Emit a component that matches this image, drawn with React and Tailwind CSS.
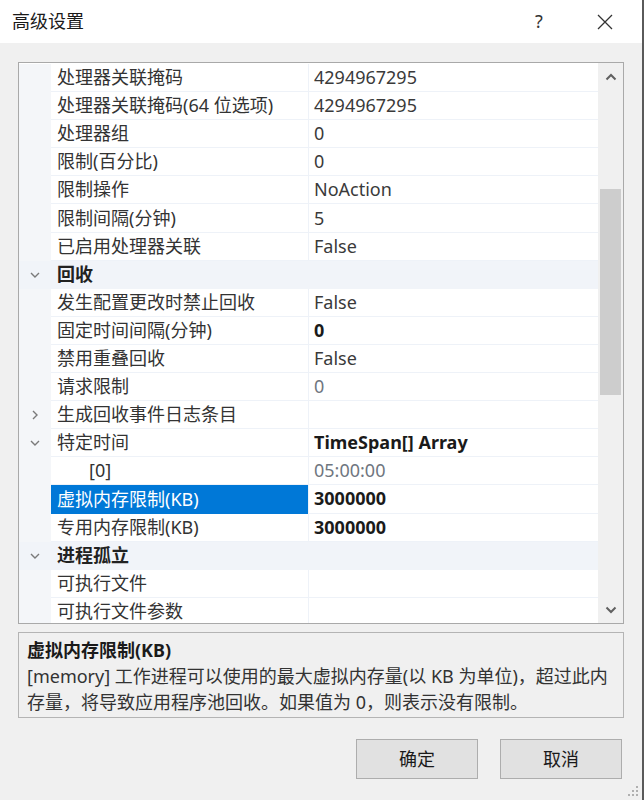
import React from 'react'

const rows = [
  { name: '处理器关联掩码', value: '4294967295' },
  { name: '处理器关联掩码(64 位选项)', value: '4294967295' },
  { name: '处理器组', value: '0' },
  { name: '限制(百分比)', value: '0' },
  { name: '限制操作', value: 'NoAction' },
  { name: '限制间隔(分钟)', value: '5' },
  { name: '已启用处理器关联', value: 'False' },
  { name: '回收', category: true },
  { name: '发生配置更改时禁止回收', value: 'False' },
  { name: '固定时间间隔(分钟)', value: '0', bold: true },
  { name: '禁用重叠回收', value: 'False' },
  { name: '请求限制', value: '0', muted: true },
  { name: '生成回收事件日志条目', value: '', toggle: 'closed' },
  { name: '特定时间', value: 'TimeSpan[] Array', bold: true, toggle: 'open' },
  { name: '[0]', value: '05:00:00', muted: true, indent: true },
  { name: '虚拟内存限制(KB)', value: '3000000', bold: true, selected: true },
  { name: '专用内存限制(KB)', value: '3000000', bold: true },
  { name: '进程孤立', category: true },
  { name: '可执行文件', value: '' },
  { name: '可执行文件参数', value: '' },
]

function Chevron({ open }) {
  return (
    <svg width="12" height="12" viewBox="0 0 12 12" className="text-[#7a7a7a]">
      {open ? (
        <path d="M2 4 L6 8 L10 4" fill="none" stroke="currentColor" strokeWidth="1.4" />
      ) : (
        <path d="M4 2 L8 6 L4 10" fill="none" stroke="currentColor" strokeWidth="1.4" />
      )}
    </svg>
  )
}

function Row({ row }) {
  if (row.category) {
    return (
      <div className="flex h-[28.1px] shrink-0 items-center bg-[#f1f4f9]">
        <div className="flex w-[32px] justify-center">
          <Chevron open />
        </div>
        <div className="pl-[6px] font-bold text-[#222]">{row.name}</div>
      </div>
    )
  }
  return (
    <div className="flex h-[28.1px] shrink-0">
      <div className="flex w-[32px] items-center justify-center bg-[#f4f6f9]">
        {row.toggle && <Chevron open={row.toggle === 'open'} />}
      </div>
      <div
        className={
          row.selected
            ? 'flex w-[257px] items-center bg-[#0078d7] pl-[6px] text-white'
            : 'flex w-[257px] items-center border-b border-[#eef2f8] pl-[6px] text-[#333]'
        }
      >
        <span className={row.indent ? 'pl-[32px]' : ''}>{row.name}</span>
      </div>
      <div className="flex flex-1 items-center border-b border-l border-[#eef2f8] pl-[5px]">
        <span
          className={
            row.bold ? 'font-bold text-[#1a1a1a]' : row.muted ? 'text-[#6f7680]' : 'text-[#3a3a3a]'
          }
        >
          {row.value}
        </span>
      </div>
    </div>
  )
}

export default function App() {
  return (
    <div className="relative flex h-[800px] w-[644px] flex-col overflow-hidden border-r-2 border-[#5a5a5a] bg-[#f0f0f0] font-['Noto_Sans','Noto_Sans_CJK_SC',sans-serif] text-[18px]">
      <div className="flex h-[43px] shrink-0 items-center bg-white pl-[12px]">
        <div className="flex-1 text-[#1a1a1a]">高级设置</div>
        <div className="mr-[19px] w-[20px] text-center text-[#333]">?</div>
        <div className="flex w-[74px] justify-center">
          <svg width="16" height="16" viewBox="0 0 16 16">
            <path d="M1 1 L15 15 M15 1 L1 15" stroke="#333" strokeWidth="1.3" />
          </svg>
        </div>
      </div>

      <div className="ml-[18px] mt-[19px] flex h-[562px] w-[606px] shrink-0 border border-[#a9a9a9] bg-white">
        <div className="flex flex-1 flex-col overflow-hidden pt-[1px]">
          {rows.map((r, i) => (
            <Row key={i} row={r} />
          ))}
        </div>
        <div className="flex w-[25px] flex-col items-center bg-[#f0f0f0]">
          <div className="flex h-[28px] items-center">
            <svg width="12" height="8" viewBox="0 0 12 8">
              <path d="M1.5 6.5 L6 2 L10.5 6.5" fill="none" stroke="#606060" strokeWidth="2" />
            </svg>
          </div>
          <div className="mt-[98px] h-[206px] w-[21px] bg-[#cdcdcd]"></div>
          <div className="flex-1"></div>
          <div className="flex h-[26px] items-center">
            <svg width="12" height="8" viewBox="0 0 12 8">
              <path d="M1.5 1.5 L6 6 L10.5 1.5" fill="none" stroke="#606060" strokeWidth="2" />
            </svg>
          </div>
        </div>
      </div>

      <div className="ml-[18px] mt-[8px] h-[86px] w-[606px] shrink-0 border border-[#b4b4b4] px-[8px] pt-[4px] leading-[26px] text-[#1a1a1a]">
        <div className="font-bold">虚拟内存限制(KB)</div>
        <div className="text-[#333]">
          [memory] 工作进程可以使用的最大虚拟内存量(以 KB 为单位)，超过此内存量，将导致应用程序池回收。如果值为 0，则表示没有限制。
        </div>
      </div>

      <div className="mr-[20px] mt-[21px] flex justify-end gap-[22px]">
        <button className="h-[40px] w-[122px] border border-[#adadad] bg-[#e1e1e1] text-[#1a1a1a]">确定</button>
        <button className="h-[40px] w-[122px] border border-[#adadad] bg-[#e1e1e1] text-[#1a1a1a]">取消</button>
      </div>

      <svg className="absolute bottom-[3px] right-[3px]" width="12" height="12" viewBox="0 0 12 12">
        <g fill="#b0b0b0">
          <rect x="9" y="1" width="2" height="2" />
          <rect x="5" y="5" width="2" height="2" />
          <rect x="9" y="5" width="2" height="2" />
          <rect x="1" y="9" width="2" height="2" />
          <rect x="5" y="9" width="2" height="2" />
          <rect x="9" y="9" width="2" height="2" />
        </g>
      </svg>
    </div>
  )
}
